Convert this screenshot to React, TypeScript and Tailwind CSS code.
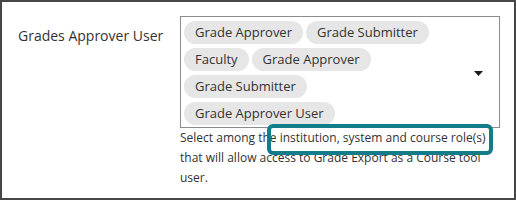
import React from "react";

const roles = [
  "Grade Approver",
  "Grade Submitter",
  "Faculty",
  "Grade Approver",
  "Grade Submitter",
  "Grade Approver User",
];

export default function App() {
  return (
    <div
      className="relative w-[516px] h-[200px] border-2 border-[#474747] bg-white text-[#333333]"
      style={{ fontFamily: '"Open Sans", "Liberation Sans", sans-serif' }}
    >
      <div className="flex pt-[14px] pl-4">
        <div className="w-[162px] shrink-0 pt-[10px] text-[14px] leading-[20px]">
          Grades Approver User
        </div>

        <div className="w-[320px]">
          {/* select */}
          <div className="flex h-[112px] items-center border border-[#8c8c8c]">
            <div className="flex flex-1 flex-wrap content-start gap-x-[3px] gap-y-[4px] self-stretch pl-[3px] pt-[4px] pr-[20px]">
              {roles.map((r, i) => (
                <span
                  key={i}
                  className="h-[23px] rounded-full bg-[#e6e6e6] px-[11px] text-[13px] leading-[23px] whitespace-nowrap"
                >
                  {r}
                </span>
              ))}
            </div>
            <svg width="9" height="5" viewBox="0 0 9 5" className="mr-[16px] mt-[2px] shrink-0">
              <path d="M0 0 H9 L4.5 5 Z" fill="#1a1a1a" />
            </svg>
          </div>

          <p className="text-[12px] leading-[20px] pr-[6px]">
            Select among the institution, system and course role(s) that will allow access to Grade Export as a Course tool user.
          </p>
        </div>
      </div>

      {/* callout highlight */}
      <div className="absolute left-[265px] top-[122px] h-[31px] w-[226px] rounded-[6px] border-4 border-[#127c8b]" />
    </div>
  );
}
